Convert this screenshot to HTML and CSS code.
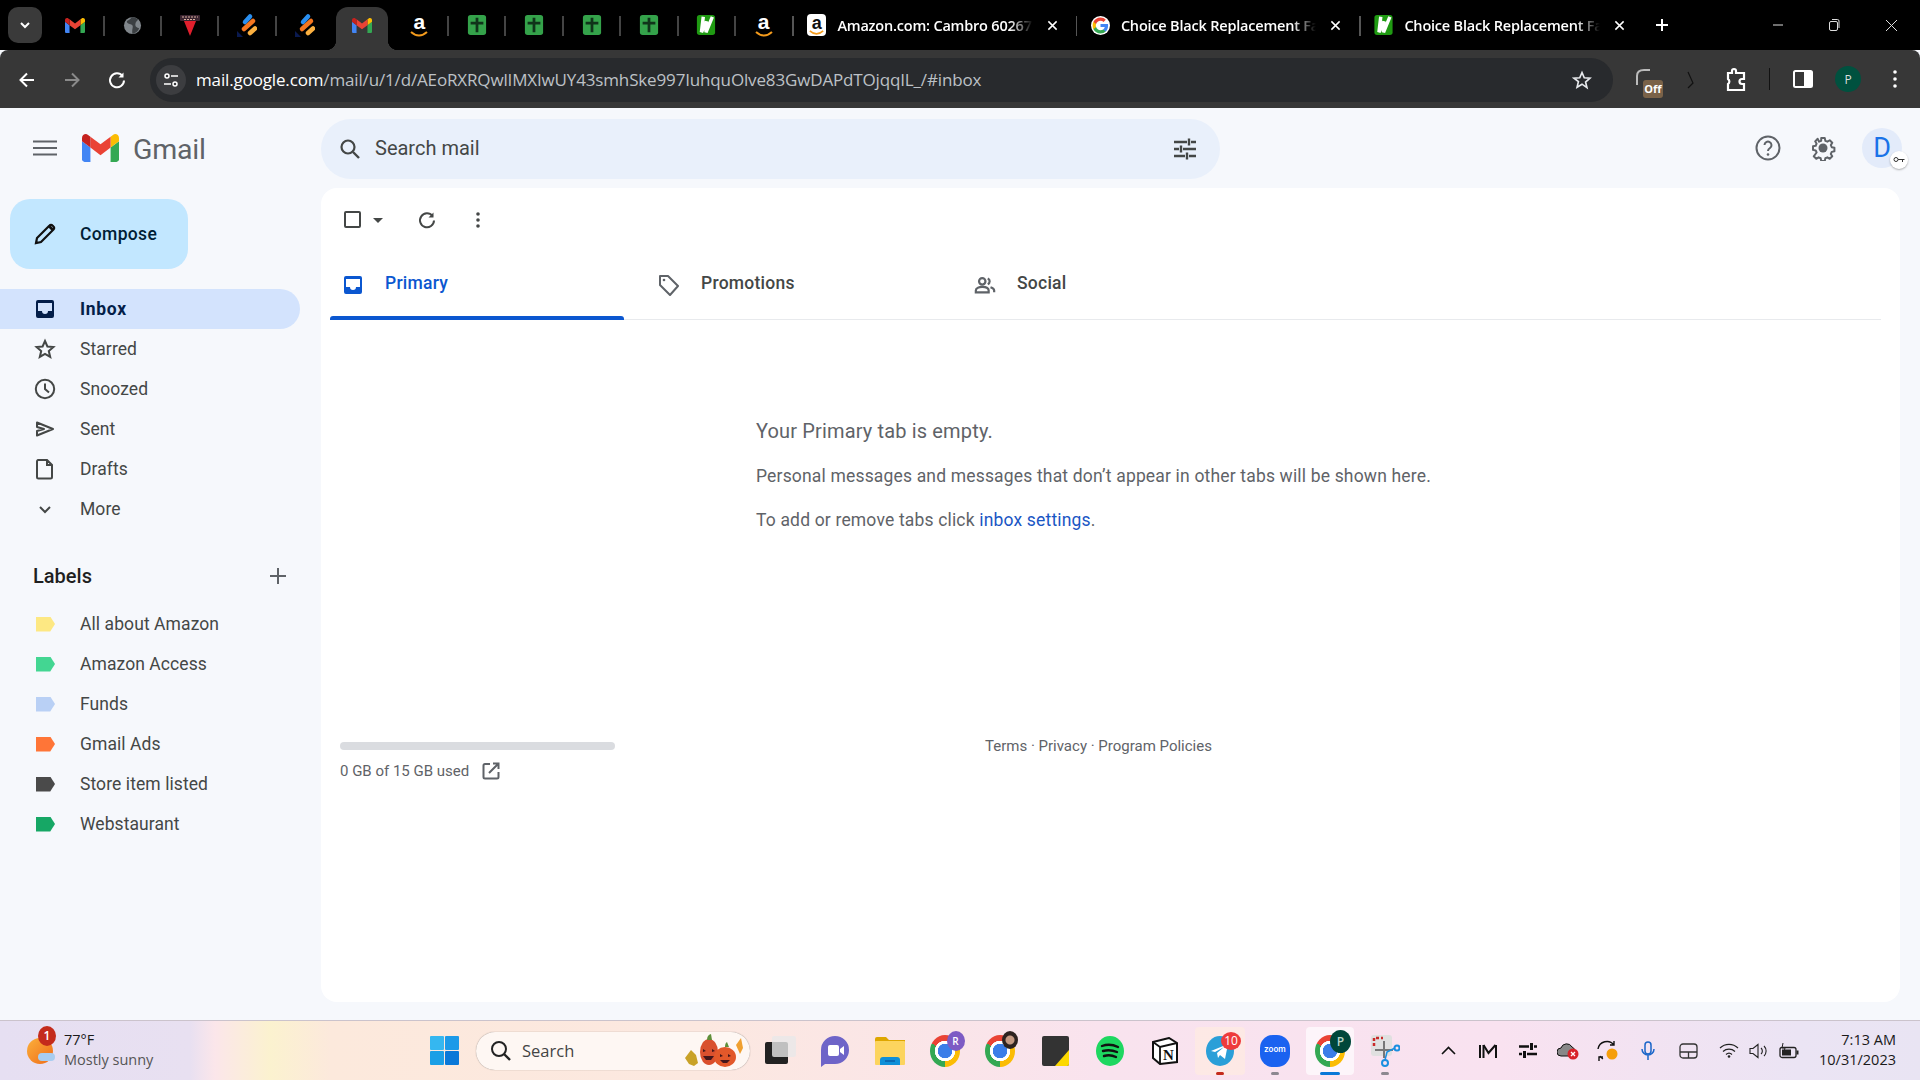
FILE: index.html
```html
<!DOCTYPE html>
<html lang="en">
<head>
<meta charset="utf-8">
<title>Gmail</title>
<link rel="stylesheet" href="styles.css">
</head>
<body>
<svg class="defs" width="0" height="0">
  <symbol id="gm" viewBox="52 42 88 66">
    <path fill="#4285f4" d="M58 108h14V74L52 59v43c0 3.32 2.69 6 6 6"/>
    <path fill="#34a853" d="M120 108h14c3.32 0 6-2.69 6-6V59l-20 15"/>
    <path fill="#fbbc04" d="M120 48v26l20-15v-8c0-7.42-8.47-11.65-14.4-7.2"/>
    <path fill="#ea4335" d="M72 74V48l24 18 24-18v26L96 92"/>
    <path fill="#c5221f" d="M52 51v8l20 15V48l-5.6-4.2c-5.94-4.45-14.4-.22-14.4 7.2"/>
  </symbol>
  <symbol id="plus" viewBox="0 0 20 22">
    <rect width="20" height="22" rx="3" fill="#34a24a"/>
    <path d="M10 3v16M3 9h14" stroke="#10331a" stroke-width="3"/>
  </symbol>
  <symbol id="smile" viewBox="0 0 18 6">
    <path d="M1 1c5 4.500 11 4.500 16 0" fill="none" stroke="#f49b1c" stroke-width="2"/>
  </symbol>
  <symbol id="ww" viewBox="0 0 20 22">
    <rect width="20" height="22" rx="3" fill="#1f9a12"/>
    <path d="M7 2 5 19 10.500 7 10 19 17 2" fill="none" stroke="#fff" stroke-width="3.800" stroke-linejoin="bevel"/>
  </symbol>
  <symbol id="jot" viewBox="0 0 20 24">
    <path d="M8 9 13 3.500" stroke="#2a8ff0" stroke-width="4.500" stroke-linecap="round"/>
    <path d="M7 16 16 8" stroke="#f5761f" stroke-width="4.500" stroke-linecap="round"/>
    <path d="M13 20 18 15.500" stroke="#fbb040" stroke-width="4.500" stroke-linecap="round"/>
    <path d="M0 18v6h6z" fill="#0a1a50"/>
  </symbol>
  <symbol id="x" viewBox="0 0 12 12">
    <path d="M1.5 1.5l9 9M10.5 1.5l-9 9" stroke="#fff" stroke-width="1.6"/>
  </symbol>
</svg>

<header class="tabstrip">
  <div class="chev"><svg width="14" height="14" viewBox="0 0 14 14"><path d="M3 5l4 4 4-4" fill="none" stroke="#fff" stroke-width="2"/></svg></div>
  <div class="minis">
    <div class="mini"><svg width="20" height="15"><use href="#gm"/></svg></div>
    <div class="mini sep"><svg width="19" height="19" viewBox="0 0 20 20"><circle cx="10" cy="10" r="9" fill="#80868b"/><path d="M9 1c-1 3-4 3-5 5 1 3 5 2 6 4s-1 4 0 9c4-1 6-3 7-6-2-1-4-1-4-4s2-4 3-5c-2-2-4-3-7-3z" fill="#3c4043"/></svg></div>
    <div class="mini sep"><svg width="20" height="24" viewBox="0 0 20 24"><path d="M4 8h12l-6 15z" fill="#e01f2d"/><rect x="0" y="2" width="20" height="6" rx="1" fill="#3a2430"/><path d="M2 4h16M4 6.500h12" stroke="#d8b0a0" stroke-dasharray="2 1"/></svg></div>
    <div class="mini sep"><svg width="20" height="24"><use href="#jot"/></svg></div>
    <div class="mini sep"><svg width="20" height="24"><use href="#jot"/></svg></div>
    <div class="mini active"><svg width="20" height="15"><use href="#gm"/></svg></div>
    <div class="mini"><span class="amz"><span class="amz-a">a</span><svg width="18" height="6"><use href="#smile"/></svg></span></div>
    <div class="mini sep"><svg width="20" height="20"><use href="#plus"/></svg></div>
    <div class="mini sep"><svg width="20" height="20"><use href="#plus"/></svg></div>
    <div class="mini sep"><svg width="20" height="20"><use href="#plus"/></svg></div>
    <div class="mini sep"><svg width="20" height="20"><use href="#plus"/></svg></div>
    <div class="mini sep"><svg width="20" height="20"><use href="#ww"/></svg></div>
    <div class="mini sep"><span class="amz"><span class="amz-a">a</span><svg width="18" height="6"><use href="#smile"/></svg></span></div>
  </div>
  <div class="longtab"><span class="fav fav-white"><span class="amz"><span class="amz-a amz-dark">a</span><svg width="15" height="5"><use href="#smile"/></svg></span></span><span class="title">Amazon.com: Cambro 60267</span><svg class="close" width="11" height="11"><use href="#x"/></svg></div>
  <div class="longtab"><span class="fav"><svg width="19" height="19" viewBox="0 0 24 24"><circle cx="12" cy="12" r="12" fill="#fff"/><path fill="#4285F4" d="M21.6 12.2c0-.7-.1-1.400-.2-2H12v3.800h5.400c-.2 1.200-.9 2.300-2 3v2.500h3.200c1.900-1.700 3-4.300 3-7.300z"/><path fill="#34A853" d="M12 22c2.700 0 5-.9 6.600-2.400l-3.200-2.500c-.9.600-2 1-3.400 1-2.600 0-4.800-1.800-5.600-4.100H3.100v2.600C4.700 19.800 8.100 22 12 22z"/><path fill="#FBBC05" d="M6.400 14c-.2-.6-.3-1.300-.3-2s.1-1.400.3-2V7.400H3.100C2.400 8.700 2 10.300 2 12s.4 3.300 1.100 4.600z"/><path fill="#EA4335" d="M12 6c1.500 0 2.800.5 3.800 1.500l2.900-2.900C17 3 14.700 2 12 2 8.100 2 4.700 4.200 3.100 7.400L6.400 10c.8-2.300 3-4 5.600-4z"/></svg></span><span class="title">Choice Black Replacement Fa</span><svg class="close" width="11" height="11"><use href="#x"/></svg></div>
  <div class="longtab"><span class="fav"><svg width="19" height="20"><use href="#ww"/></svg></span><span class="title">Choice Black Replacement Fa</span><svg class="close" width="11" height="11"><use href="#x"/></svg></div>
  <div class="newtab"><svg width="14" height="14" viewBox="0 0 14 14"><path d="M7 1v12M1 7h12" stroke="#fff" stroke-width="2"/></svg></div>
  <div class="winctl">
    <div class="wc"><svg width="12" height="12" viewBox="0 0 12 12"><path d="M1 6h10" stroke="#ddd"/></svg></div>
    <div class="wc wc-restore"><svg width="12" height="14" viewBox="0 0 12 14"><rect x="1.500" y="3.500" width="8" height="9" rx="1.500" fill="none" stroke="#ddd"/><path d="M4 1.500h5.500a1.500 1.500 0 0 1 1.500 1.500v7" fill="none" stroke="#ddd"/></svg></div>
    <div class="wc"><svg width="13" height="13" viewBox="0 0 13 13"><path d="M1 1l11 11M12 1L1 12" stroke="#ddd"/></svg></div>
  </div>
</header>

<nav class="toolbar">
  <div class="navbtn"><svg width="20" height="20" viewBox="0 0 20 20"><path d="M17 10H4M10 3.500L3.500 10l6.500 6.500" fill="none" stroke="#fff" stroke-width="2"/></svg></div>
  <div class="navbtn"><svg width="20" height="20" viewBox="0 0 20 20"><path d="M3 10h13M10 3.500l6.500 6.500-6.500 6.500" fill="none" stroke="#8a8a8a" stroke-width="2"/></svg></div>
  <div class="navbtn"><svg width="20" height="20" viewBox="0 0 20 20"><path d="M15.500 6A7 7 0 1 0 17 10.500" fill="none" stroke="#fff" stroke-width="2"/><path d="M16.500 2.500v5h-5z" fill="#fff"/></svg></div>
  <div class="urlbar">
    <div class="siteinfo"><svg width="16" height="16" viewBox="0 0 16 16"><circle cx="4" cy="4" r="2" fill="none" stroke="#fff" stroke-width="1.500"/><path d="M8 4h7M1 12h7" stroke="#fff" stroke-width="1.500"/><circle cx="12" cy="12" r="2" fill="none" stroke="#fff" stroke-width="1.500"/></svg></div>
    <div class="url"><span class="domain">mail.google.com</span>/mail/u/1/d/AEoRXRQwlIMXIwUY43smhSke997IuhquOlve83GwDAPdTOjqqIL_/#inbox</div>
    <svg class="star" width="20" height="20" viewBox="0 0 24 24"><path d="M12 3l2.700 6.300 6.800.6-5.200 4.500 1.600 6.700L12 17l-5.900 3.600 1.600-6.700L2.500 9.900l6.800-.6z" fill="none" stroke="#e8eaed" stroke-width="2"/></svg>
  </div>
  <div class="ext-off"><svg width="26" height="20" viewBox="0 0 26 20"><path d="M2 17V8c0-4 3-6 7-6h6" fill="none" stroke="#bbb" stroke-width="2"/></svg><span class="off">Off</span></div>
  <svg class="ext-slash" width="8" height="18" viewBox="0 0 8 18"><path d="M1 1l5 11-5 5" fill="none" stroke="#111" stroke-width="1.200"/></svg>
  <svg class="ext-puzzle" width="22" height="24" viewBox="0 0 22 24"><path d="M3 5h4V3a2 2 0 0 1 4 0v2h8v6h-2a2 2 0 0 0 0 5h2v6H3v-6a3 3 0 0 0 0-5z" transform="translate(0 1)" fill="none" stroke="#fff" stroke-width="2.200"/></svg>
  <div class="tool-sep"></div>
  <svg class="side" width="20" height="18" viewBox="0 0 20 18"><rect x="1" y="1" width="18" height="16" rx="1.500" fill="none" stroke="#fff" stroke-width="2"/><rect x="11" y="1" width="8" height="16" fill="#fff"/></svg>
  <div class="prof">P</div>
  <svg class="dots" width="4" height="18" viewBox="0 0 4 18"><circle cx="2" cy="2" r="1.800" fill="#fff"/><circle cx="2" cy="9" r="1.800" fill="#fff"/><circle cx="2" cy="16" r="1.800" fill="#fff"/></svg>
</nav>

<div class="app">
  <aside class="sidebar">
    <div class="brand">
      <svg class="burger" width="24" height="16" viewBox="0 0 24 16"><path d="M0 1.500h24M0 8h24M0 14.500h24" stroke="#5f6368" stroke-width="2"/></svg>
      <svg class="mlogo" width="37" height="28"><use href="#gm"/></svg>
      <span class="wordmark">Gmail</span>
    </div>
    <button class="compose"><svg width="24" height="24" viewBox="0 0 24 24"><path d="M3 21l1-5L16.500 3.500a2 2 0 0 1 3 0l1 1a2 2 0 0 1 0 3L8 20z" fill="none" stroke="#111" stroke-width="2.200"/><path d="M15 5l4 4 2-2-4-4z" fill="#111"/></svg><span>Compose</span></button>
    <ul class="nav">
      <li class="row current"><svg class="ic" width="24" height="24" viewBox="0 0 24 24"><path d="M5 3h14a2 2 0 0 1 2 2v14a2 2 0 0 1-2 2H5a2 2 0 0 1-2-2V5a2 2 0 0 1 2-2zm0 3v8h4a3 3 0 0 0 6 0h4V6z" fill="#041e49" fill-rule="evenodd"/></svg><span>Inbox</span></li>
      <li class="row"><svg class="ic" width="24" height="24" viewBox="0 0 24 24"><path d="M12 4l2.400 5.500 6 .5-4.600 4 1.400 5.900L12 16.800 6.800 19.900 8.200 14 3.600 10l6-.5z" fill="none" stroke="#444746" stroke-width="2"/></svg><span>Starred</span></li>
      <li class="row"><svg class="ic" width="24" height="24" viewBox="0 0 24 24"><circle cx="12" cy="12" r="9.200" fill="none" stroke="#444746" stroke-width="2"/><path d="M12 6.500V12l4 3.500" fill="none" stroke="#444746" stroke-width="2"/></svg><span>Snoozed</span></li>
      <li class="row"><svg class="ic" width="24" height="24" viewBox="0 0 24 24"><path d="M4 5.500L20 12 4 18.500V14l7-2-7-2z" fill="none" stroke="#444746" stroke-width="2" stroke-linejoin="round"/></svg><span>Sent</span></li>
      <li class="row"><svg class="ic" width="24" height="24" viewBox="0 0 24 24"><path d="M5 3h9l5 5v12a1.500 1.500 0 0 1-1.500 1.500h-12A1.500 1.500 0 0 1 4 20V4.500A1.500 1.500 0 0 1 5 3zM14 3v5h5" fill="none" stroke="#444746" stroke-width="2"/></svg><span>Drafts</span></li>
      <li class="row"><svg class="ic" width="24" height="24" viewBox="0 0 24 24"><path d="M7 10l5 5 5-5" fill="none" stroke="#444746" stroke-width="2"/></svg><span>More</span></li>
    </ul>
    <div class="labels-head"><span>Labels</span><svg width="16" height="16" viewBox="0 0 16 16"><path d="M8 0v16M0 8h16" stroke="#5f6368" stroke-width="2"/></svg></div>
    <ul class="nav labels">
      <li class="row"><span class="tag tag-yellow"></span><span>All about Amazon</span></li>
      <li class="row"><span class="tag tag-mint"></span><span>Amazon Access</span></li>
      <li class="row"><span class="tag tag-blue"></span><span>Funds</span></li>
      <li class="row"><span class="tag tag-orange"></span><span>Gmail Ads</span></li>
      <li class="row"><span class="tag tag-dark"></span><span>Store item listed</span></li>
      <li class="row"><span class="tag tag-green"></span><span>Webstaurant</span></li>
    </ul>
  </aside>

  <main class="main">
    <div class="topbar">
      <div class="search">
        <svg width="24" height="24" viewBox="0 0 24 24"><circle cx="10" cy="10" r="6.500" fill="none" stroke="#444746" stroke-width="2.200"/><path d="M15 15l6 6" stroke="#444746" stroke-width="2.400"/></svg>
        <span class="ph">Search mail</span>
        <svg class="tune" width="24" height="24" viewBox="0 0 24 24"><path d="M1 5h13M18 5h5M1 12h5M10 12h13M1 19h11M16 19h7M16 1.500v7M8 8.500v7M14 15.500v7" stroke="#444746" stroke-width="2.400"/></svg>
      </div>
      <div class="top-icons">
        <svg class="help" width="26" height="26" viewBox="0 0 26 26"><circle cx="13" cy="13" r="11.500" fill="none" stroke="#5f6368" stroke-width="2"/><path d="M9.500 10a3.500 3.500 0 1 1 5.500 3c-1.500 1-2 1.500-2 3" fill="none" stroke="#5f6368" stroke-width="2"/><circle cx="13" cy="19.500" r="1.300" fill="#5f6368"/></svg>
        <svg class="gear" width="26" height="26" viewBox="0 0 26 26"><path d="M11 2h4l.6 3 2.300 1 2.600-1.600 2.800 2.800-1.600 2.600 1 2.300 3 .6v4l-3 .6-1 2.300 1.600 2.600-2.800 2.800-2.600-1.600-2.300 1-.6 3h-4l-.6-3-2.300-1-2.600 1.600-2.800-2.800L5.900 18l-1-2.300-3-.6v-4l3-.6 1-2.300-1.600-2.600 2.800-2.800L8.700 6 11 5z" transform="translate(1.300 1.300) scale(.9)" fill="none" stroke="#5f6368" stroke-width="2.200" stroke-linejoin="round"/><circle cx="13" cy="13" r="4.500" fill="#5f6368"/></svg>
        <div class="avatar">D<span class="keybadge"><svg width="12" height="8" viewBox="0 0 12 8"><circle cx="3" cy="3.500" r="2" fill="none" stroke="#333"/><path d="M5 3.500h6.500M9.500 3.500v2.500" stroke="#333"/></svg></span></div>
      </div>
    </div>

    <section class="card">
      <div class="actions">
        <span class="check"></span>
        <svg class="caret" width="10" height="5" viewBox="0 0 10 5"><path d="M0 0h10L5 5z" fill="#444746"/></svg>
        <svg class="refresh" width="20" height="20" viewBox="0 0 20 20"><path d="M15.500 6A7 7 0 1 0 17 10.500" fill="none" stroke="#444746" stroke-width="2"/><path d="M16.500 2.500v5h-5z" fill="#444746"/></svg>
        <svg class="more" width="4" height="16" viewBox="0 0 4 16"><circle cx="2" cy="2" r="1.800" fill="#444746"/><circle cx="2" cy="8" r="1.800" fill="#444746"/><circle cx="2" cy="14" r="1.800" fill="#444746"/></svg>
      </div>
      <div class="tabs">
        <div class="tab selected"><svg width="20" height="20" viewBox="0 0 20 20"><path d="M3 1h14a2 2 0 0 1 2 2v14a2 2 0 0 1-2 2H3a2 2 0 0 1-2-2V3a2 2 0 0 1 2-2zm0 3v8h4a3 3 0 0 0 6 0h4V4z" fill="#0b57d0" fill-rule="evenodd"/></svg><span>Primary</span></div>
        <div class="tab"><svg width="22" height="22" viewBox="0 0 22 22"><path d="M2 2h8l10 10-8 9L2 11z" fill="none" stroke="#5f6368" stroke-width="2" stroke-linejoin="round"/><circle cx="6" cy="6" r="1.300" fill="#5f6368"/></svg><span>Promotions</span></div>
        <div class="tab"><svg width="22" height="22" viewBox="0 0 24 24"><circle cx="9" cy="8" r="3.500" fill="none" stroke="#5f6368" stroke-width="2.400"/><path d="M2 20v-2c0-3 4-4 7-4s7 1 7 4v2z" fill="none" stroke="#5f6368" stroke-width="2.400"/><path d="M15 4.800a3.500 3.500 0 0 1 0 6.400M18 14.500c2 .7 4 1.700 4 3.500v2" fill="none" stroke="#5f6368" stroke-width="2.400"/></svg><span>Social</span></div>
      </div>
      <div class="empty">
        <h2>Your Primary tab is empty.</h2>
        <p class="msg">Personal messages and messages that don’t appear in other tabs will be shown here.</p>
        <p>To add or remove tabs click <a href="#">inbox settings</a>.</p>
      </div>
      <div class="foot">
        <div class="storage">
          <div class="bar"></div>
          <div class="used"><span>0 GB of 15 GB used</span><svg width="18" height="18" viewBox="0 0 18 18"><path d="M8 2H3a1.500 1.500 0 0 0-1.500 1.500v11.500A1.500 1.500 0 0 0 3 16.500h12a1.500 1.500 0 0 0 1.500-1.500V10M11 1.500h5.500V7M16.500 1.500L7 11" fill="none" stroke="#5f6368" stroke-width="2"/></svg></div>
        </div>
        <div class="legal">Terms · Privacy · Program Policies</div>
      </div>
    </section>
  </main>
</div>

<footer class="taskbar">
  <div class="weather">
    <span class="sun"><span class="sun-cloud"></span><span class="sun-badge">1</span></span>
    <div class="wtext"><div class="temp">77°F</div><div class="cond">Mostly sunny</div></div>
  </div>
  <svg class="start" width="29" height="29" viewBox="0 0 29 29"><rect width="14" height="14" rx="1" fill="#35b7f0"/><rect x="15" width="14" height="14" rx="1" fill="#1c9ae8"/><rect y="15" width="14" height="14" rx="1" fill="#1b9fe6"/><rect x="15" y="15" width="14" height="14" rx="1" fill="#0a78d8"/></svg>
  <div class="tsearch">
    <svg width="21" height="21" viewBox="0 0 21 21"><circle cx="9" cy="9" r="7" fill="none" stroke="#222" stroke-width="2"/><path d="M14 14l6 6" stroke="#222" stroke-width="2.400"/></svg>
    <span class="tsearch-text">Search</span>
    <svg class="pumpkins" width="62" height="34" viewBox="0 0 62 34"><path d="M2 24l6-8 5 5 2 8-4 3-5-2z" fill="#c9a227"/><path d="M58 4l2 10-3 6-4-9z" fill="#f0a030"/><ellipse cx="26" cy="18" rx="9" ry="13" fill="#d9502e"/><ellipse cx="42" cy="23" rx="11" ry="10" fill="#e2582a"/><path d="M24 6q0-5 4-6l1 6zM42 13q0-4 2-5l2 5z" fill="#5f8f3a"/><path d="M20 15l3 2-3 1zM29 15l3 2-3 1zM37 20l3 2-3 1zM45 20l3 2-3 1zM20 22h11l-3 4h-5zM37 26h10l-3 3h-4z" fill="#43161a"/></svg>
  </div>
  <div class="slot"><svg width="31" height="29" viewBox="0 0 31 29"><rect x="0" y="6" width="23" height="22" rx="2" fill="#222"/><rect x="7" y="0" width="24" height="21" rx="2" fill="#e8e8e8" opacity=".8"/></svg></div>
  <div class="slot"><svg width="30" height="32" viewBox="0 0 30 32"><path d="M15 1a14 14 0 0 1 14 14 14 14 0 0 1-14 14H5l-4 3v-17A14 14 0 0 1 15 1z" fill="#6e64c8"/><rect x="8" y="10" width="11" height="11" rx="2" fill="#fff"/><path d="M20 14l4-3v9l-4-3z" fill="#fff"/></svg></div>
  <div class="slot"><svg width="30" height="28" viewBox="0 0 30 28"><path d="M0 2a2 2 0 0 1 2-2h9l3 3h16v4H0z" fill="#dea600"/><rect y="4" width="30" height="24" rx="1" fill="#fcd45e"/><path d="M5 28v-5a3 3 0 0 1 3-3h14a3 3 0 0 1 3 3v5z" fill="#0f8fd8"/><path d="M10 24h10" stroke="#0a5ea8" stroke-width="1.500"/></svg></div>
  <div class="slot"><span class="chrome"></span><span class="chip chip-r">R</span></div>
  <div class="slot"><span class="chrome"></span><span class="chip chip-photo"></span></div>
  <div class="slot"><svg width="27" height="30" viewBox="0 0 27 30"><rect width="27" height="30" rx="2" fill="#333"/><path d="M13 30 27 14v14a2 2 0 0 1-2 2z" fill="#fcd800"/></svg></div>
  <div class="slot"><svg width="28" height="30" viewBox="0 0 28 30"><ellipse cx="14" cy="15" rx="14" ry="15" fill="#1ed760"/><path d="M6 10q8-3 16 1M7 15q7-2 14 1M8 20q6-2 12 1" fill="none" stroke="#111" stroke-width="2.400" stroke-linecap="round"/></svg></div>
  <div class="slot"><svg width="26" height="28" viewBox="0 0 26 28"><path d="M1 5 17 1l8 5v19l-17 2-7-6z" fill="#fff" stroke="#111" stroke-width="2"/><path d="M1 5l7 5 17-4M8 10v17" fill="none" stroke="#111" stroke-width="1.800"/><text x="16.500" y="23" text-anchor="middle" class="notion-n">N</text></svg></div>
  <div class="slot highlight-red"><svg width="28" height="30" viewBox="0 0 28 30"><ellipse cx="14" cy="15" rx="14" ry="15" fill="#2a9fd8"/><path d="M5 15l17-7-3 15-5-4-2 3-1-5 7-6-9 5z" fill="#fff"/></svg><span class="tele-badge">10</span><span class="ind ind-red"></span></div>
  <div class="slot"><svg width="30" height="32" viewBox="0 0 30 32"><rect width="30" height="32" rx="13" fill="#1a62f0"/></svg><span class="zoomword">zoom</span><span class="ind ind-gray"></span></div>
  <div class="slot highlight-white"><span class="chrome"></span><span class="chip chip-p">P</span><span class="ind ind-blue"></span></div>
  <div class="slot"><svg width="30" height="34" viewBox="0 0 30 34"><rect x="1" y="1" width="21" height="21" rx="3" fill="#e0e0e0"/><path d="M4 12V4h9" fill="none" stroke="#c92a2a" stroke-width="2.500" stroke-dasharray="3 2"/><path d="M14 7v17M5 16h18" stroke="#777" stroke-width="2"/><circle cx="15" cy="29" r="3" fill="none" stroke="#1a8fe0" stroke-width="2"/><circle cx="27" cy="14" r="2.500" fill="none" stroke="#1a8fe0" stroke-width="2"/><path d="M15 26l2-8 8-4" fill="none" stroke="#1a8fe0" stroke-width="1.500"/></svg><span class="ind ind-gray"></span></div>
  <div class="tray">
    <div class="ti"><svg width="15" height="9" viewBox="0 0 15 9"><path d="M1 8l6.500-6.500L14 8" fill="none" stroke="#111" stroke-width="1.600"/></svg></div>
    <div class="ti"><svg width="18" height="14" viewBox="0 0 18 14"><path d="M1 1v13M4.500 1v13M17 1v13" stroke="#111" stroke-width="2"/><path d="M4.500 1l5 8 7-8" fill="none" stroke="#111" stroke-width="2"/></svg></div>
    <div class="ti"><svg width="18" height="15" viewBox="0 0 18 15"><path d="M0 3.500h10M15 3.500h3M0 11h3M8 11h10" stroke="#111" stroke-width="2.500"/><rect x="11" y="0" width="3" height="7" fill="#111"/><rect x="4" y="8" width="3" height="7" fill="#111"/></svg></div>
    <div class="ti"><svg width="22" height="18" viewBox="0 0 22 18"><path d="M4 14a4 4 0 0 1 0-8 6 6 0 0 1 11-1 4 4 0 0 1 2 6l-3 3z" fill="#888" stroke="#111"/><circle cx="16" cy="12" r="5.500" fill="#d8232a"/><path d="M14 10l4 4M18 10l-4 4" stroke="#fff" stroke-width="1.300"/></svg></div>
    <div class="ti"><svg width="22" height="22" viewBox="0 0 22 22"><path d="M1 9a9 9 0 0 1 16-4M17 1v4h-4M6 19a8 8 0 0 1-3-3M2 21v-4h4" fill="none" stroke="#111" stroke-width="1.400"/><circle cx="15" cy="14" r="5.500" fill="#f59e0b"/></svg></div>
    <div class="ti"><svg width="14" height="20" viewBox="0 0 14 20"><rect x="4" y="1" width="6" height="12" rx="3" fill="none" stroke="#1a66c9" stroke-width="1.500"/><path d="M1 8a6 6 0 0 0 12 0M7 14v5" fill="none" stroke="#1a66c9" stroke-width="1.500"/></svg></div>
    <div class="ti"><svg width="19" height="16" viewBox="0 0 19 16"><rect x="1" y="1" width="17" height="14" rx="3" fill="none" stroke="#333" stroke-width="1.300"/><path d="M1 9h17M9.500 9v6" stroke="#333" stroke-width="1.300"/></svg></div>
    <div class="ti ti-wifi"><svg width="20" height="15" viewBox="0 0 20 15"><path d="M1 5a13 13 0 0 1 18 0M4 8.500a9 9 0 0 1 12 0M7 11.500a4.500 4.500 0 0 1 6 0" fill="none" stroke="#222" stroke-width="1.200"/><circle cx="10" cy="13.500" r="1.300" fill="#222"/></svg></div>
    <div class="ti ti-vol"><svg width="20" height="16" viewBox="0 0 20 16"><path d="M1 5.500h3L9 1.500v13l-5-4H1z" fill="none" stroke="#222" stroke-width="1.100"/><path d="M12 5a4 4 0 0 1 0 6M15 3a7 7 0 0 1 0 10" fill="none" stroke="#222" stroke-width="1.100"/></svg></div>
    <div class="ti ti-bat"><svg width="20" height="16" viewBox="0 0 20 16"><rect x="1" y="4.500" width="16" height="10" rx="2" fill="none" stroke="#222" stroke-width="1.300"/><rect x="3" y="6.500" width="9" height="6" fill="#222"/><rect x="17.500" y="7.500" width="2" height="4" fill="#222"/><path d="M4 0l-1 5h3L5 9" fill="none" stroke="#222" stroke-width="1"/></svg></div>
    <div class="clock"><div>7:13 AM</div><div>10/31/2023</div></div>
  </div>
</footer>
</body>
</html>
```

FILE: styles.css
```css
* { box-sizing: border-box; }
html, body { margin: 0; padding: 0; height: 100%; }
body { width: 1920px; height: 1080px; overflow: hidden; display: flex; flex-direction: column; font-family: Roboto, "Liberation Sans", sans-serif; background: #f6f8fc; }
ul { list-style: none; margin: 0; padding: 0; }
svg { display: block; flex: none; }
.defs { position: absolute; }
.amz { display: flex; flex-direction: column; align-items: center; }
.amz-a { font: 700 21px/18px "Liberation Sans", sans-serif; color: #fff; height: 18px; }
.amz-dark { font-size: 18px; line-height: 14px; height: 14px; color: #111; }
.notion-n { font: 700 15px "Liberation Serif", serif; fill: #111; }

/* tab strip */
.tabstrip { height: 50px; flex: none; background: #000; display: flex; align-items: center; font-family: "Open Sans", sans-serif; }
.chev { width: 34px; height: 36px; margin-left: 8px; background: #3a3a3a; border-radius: 10px; display: flex; align-items: center; justify-content: center; }
.minis { display: flex; height: 50px; margin-left: 4.3px; }
.mini { width: 57.4px; height: 50px; display: flex; align-items: center; justify-content: center; position: relative; }
.mini.sep::before { content: ""; position: absolute; left: -1px; top: 16px; width: 2px; height: 20px; background: #444; }
.mini.active { background: #373737; width: 51.4px; margin: 7px 3px 0; height: 43px; border-radius: 12px 12px 0 0; padding-bottom: 7px; }
.mini.active::before, .mini.active::after { content: ""; position: absolute; bottom: 0; width: 10px; height: 10px; }
.mini.active::before { left: -10px; background: radial-gradient(circle at 0 0, #000 10px, #373737 10.5px); }
.mini.active::after { right: -10px; background: radial-gradient(circle at 100% 0, #000 10px, #373737 10.5px); }
.longtab { width: 283.5px; height: 50px; display: flex; align-items: center; padding: 0 18px 0 15px; gap: 11px; position: relative; flex: none; }
.longtab::before { content: ""; position: absolute; left: 0; top: 16px; width: 1.5px; height: 20px; background: #555; }
.fav { width: 19px; height: 22px; display: flex; align-items: center; justify-content: center; flex: none; }
.fav-white { background: #fff; border-radius: 4px; }
.title { flex: 1; min-width: 0; white-space: nowrap; color: #fff; font-size: 14.5px; font-weight: 600; letter-spacing: -.2px; -webkit-mask-image: linear-gradient(90deg, #000 88%, transparent 100%); mask-image: linear-gradient(90deg, #000 88%, transparent 100%); }
.close { margin-left: 3px; }
.newtab { width: 38px; height: 50px; display: flex; align-items: center; justify-content: center; flex: none; }
.winctl { margin-left: auto; display: flex; }
.wc { width: 57px; height: 50px; display: flex; align-items: center; justify-content: center; }
.wc-restore svg { margin-left: -2px; }

/* browser toolbar */
.toolbar { height: 58px; flex: none; background: #373737; border-radius: 8px 8px 0 0; display: flex; align-items: center; padding: 2px 0 0 4.500px; }
.navbtn { width: 45px; height: 40px; display: flex; align-items: center; justify-content: center; flex: none; }
.urlbar { margin-left: 10.500px; width: 1463px; height: 44px; border-radius: 22px; background: #282a2d; display: flex; align-items: center; padding: 0 21px 0 6px; flex: none; }
.siteinfo { width: 30px; height: 30px; border-radius: 50%; background: #3c3d40; display: flex; align-items: center; justify-content: center; flex: none; }
.url { margin-left: 10px; flex: 1; font-family: "Open Sans", sans-serif; font-size: 17px; color: #bdc1c6; white-space: nowrap; letter-spacing: -.15px; margin-top: -1px; }
.domain { color: #fff; }
.ext-off { width: 28px; height: 30px; margin-left: 22px; position: relative; flex: none; margin-top: 6px; }
.off { position: absolute; right: 0; bottom: 0; width: 20px; height: 18px; background: #7a6248; border-radius: 3px; color: #fff; font: 700 11px "Open Sans", sans-serif; text-align: center; line-height: 18px; }
.ext-slash { margin-left: 24px; }
.ext-puzzle { margin-left: 30px; margin-top: -2px; }
.tool-sep { width: 1px; height: 22px; background: #111; margin-left: 22px; flex: none; margin-top: -2px; }
.side { margin-left: 23px; margin-top: -2px; }
.prof { width: 26px; height: 26px; margin-left: 22px; margin-top: -2px; border-radius: 50%; background: #00513f; color: #ddd; font: 500 12px "Open Sans", sans-serif; display: flex; align-items: center; justify-content: center; flex: none; }
.dots { margin-left: 32px; margin-top: -2px; }

/* gmail */
.app { flex: 1; min-height: 0; display: flex; background: #f6f8fc; }
.sidebar { width: 320px; flex: none; }
.brand { height: 80px; display: flex; align-items: center; padding-left: 33px; }
.mlogo { margin-left: 25px; }
.wordmark { margin-left: 14px; margin-top: 2px; font-size: 28.500px; color: #5f6368; letter-spacing: -.2px; }
.compose { margin: 11px 0 0 10px; width: 178px; height: 70px; border: 0; border-radius: 20px; background: #c2e7ff; display: flex; align-items: center; padding: 0 0 0 23px; gap: 23px; font: 500 17.500px Roboto, sans-serif; letter-spacing: .35px; color: #001d35; }
.nav { margin-top: 20px; }
.row { height: 40px; width: 300px; border-radius: 0 20px 20px 0; display: flex; align-items: center; padding-left: 33px; gap: 23px; font-size: 17.500px; letter-spacing: .08px; color: #444746; }
.row.current { background: #d3e3fd; color: #041e49; font-weight: 700; letter-spacing: .7px; }
.labels-head { margin-top: 27px; height: 40px; width: 286px; padding-left: 33px; display: flex; align-items: center; justify-content: space-between; font-size: 20px; font-weight: 500; color: #1f1f1f; }
.labels { margin-top: 8px; }
.tag { height: 15px; flex: none; clip-path: polygon(0 0, 75% 0, 100% 50%, 75% 100%, 0 100%); margin-left: 3px; width: 19px; margin-right: 2px; }
.tag-yellow { background: #fde883; }
.tag-mint { background: #43d692; }
.tag-blue { background: #b9d0f5; }
.tag-orange { background: #ff7537; }
.tag-dark { background: #4a4a4a; }
.tag-green { background: #16a765; }

.main { flex: 1; min-width: 0; padding: 0 20px 18px 1px; display: flex; flex-direction: column; }
.topbar { height: 80px; flex: none; display: flex; align-items: flex-start; }
.search { margin-top: 11px; width: 899px; height: 60px; border-radius: 30px; background: #e9f0fb; display: flex; align-items: center; padding: 0 23px 0 17px; }
.ph { margin-left: 13px; margin-top: -2px; flex: 1; font-size: 20px; color: #444746; }
.top-icons { margin-left: auto; display: flex; align-items: center; height: 80px; }
.gear { margin-left: 29px; }
.avatar { margin-left: 26px; margin-right: -2px; width: 40px; height: 40px; border-radius: 50%; background: #e3ebfa; color: #1a73e8; font-size: 27px; display: flex; align-items: center; justify-content: center; position: relative; }
.keybadge { position: absolute; right: -6px; bottom: -1px; width: 18px; height: 18px; border-radius: 50%; background: #fff; box-shadow: 0 1px 2px rgba(0,0,0,.3); display: flex; align-items: center; justify-content: center; }
.card { flex: 1; min-height: 0; background: #fff; border-radius: 16px; }
.actions { height: 64px; display: flex; align-items: center; padding-left: 23px; }
.check { width: 17px; height: 17px; border: 2px solid #444746; border-radius: 2px; margin-top: -1px; }
.caret { margin-left: 12px; }
.refresh { margin-left: 34px; margin-top: -1px; }
.more { margin-left: 39px; margin-top: -1px; }
.tabs { height: 68px; margin: 0 19px 0 9px; border-bottom: 1px solid #e8eaed; display: flex; gap: 22px; }
.tab { width: 294px; padding-left: 13px; display: flex; align-items: center; gap: 22px; font-size: 17.500px; font-weight: 500; letter-spacing: .25px; color: #444746; position: relative; }
.tab span { margin-top: -6px; margin-left: 0; }
.tab svg { margin-top: -2px; }
.tab svg[width="22"] { margin-left: -1px; margin-right: -1px; }
.tab.selected { color: #0b57d0; }
.tab.selected::after { content: ""; position: absolute; left: 0; right: 0; bottom: -1px; height: 4px; background: #0b57d0; border-radius: 3px 3px 0 0; }
.empty { margin: 99px 0 0 435px; color: #5f6368; }
.empty h2 { margin: 0; font-size: 20px; line-height: 24px; font-weight: 400; letter-spacing: .15px; }
.empty p { margin: 20px 0 0; font-size: 17.500px; line-height: 24px; letter-spacing: .17px; }
.empty .msg { margin-top: 21px; }
.empty a { color: #1a56c4; text-decoration: none; }
.foot { margin-top: 204px; padding-left: 19px; display: flex; }
.storage { width: 275px; padding-top: 6px; }
.bar { height: 8px; border-radius: 4px; background: #dadce0; }
.used { margin-top: 10px; display: flex; align-items: center; gap: 13px; font-size: 15px; color: #5f6368; line-height: 22px; }
.legal { margin-left: 370px; font-size: 15px; line-height: 20px; color: #5f6368; }

/* taskbar */
.taskbar { height: 60px; flex: none; border-top: 1px solid #cbc3cc; display: flex; align-items: center; font-family: "Open Sans", sans-serif; background: linear-gradient(90deg, #e6dff2 0, #e8e0f1 190px, #fbe6ea 215px, #fbf2cf 270px, #fce9dc 330px, #fce8e0 700px, #f9e3ee 1100px, #f9e2f0 1500px, #ebe4f4 1800px, #e9e4f3 1920px); }
.weather { width: 430px; flex: none; display: flex; align-items: center; padding-left: 27px; }
.sun { width: 26px; height: 26px; border-radius: 50%; background: linear-gradient(135deg, #fbb03b, #ef6c1a); position: relative; flex: none; }
.sun-cloud { position: absolute; right: -2px; bottom: 3px; width: 17px; height: 8px; border-radius: 5px; background: #a8cdf0; }
.sun-badge { position: absolute; left: 11px; top: -12px; width: 18px; height: 20px; border-radius: 50%; background: #c42b1c; color: #fff; font-size: 12px; font-weight: 600; text-align: center; line-height: 20px; }
.wtext { margin-left: 11px; font-size: 14.500px; line-height: 20px; color: #1a1a1a; margin-top: -2px; }
.cond { color: #555; }
.start { flex: none; }
.tsearch { margin-left: 17px; width: 274px; height: 38px; border-radius: 19px; background: #fef7f3; box-shadow: 0 0 1px rgba(0,0,0,.5); display: flex; align-items: center; padding-left: 14px; position: relative; flex: none; }
.tsearch-text { margin-left: 11px; font-size: 16.500px; color: #444; }
.pumpkins { position: absolute; right: 5px; top: 2px; }
.slot { width: 55px; height: 48px; flex: none; display: flex; align-items: center; justify-content: center; position: relative; }
.tsearch + .slot { margin-left: 2.500px; }
.highlight-red { background: rgba(255,235,225,.7); width: 50px; margin: 0 2.500px; border-radius: 4px; }
.highlight-white { background: rgba(255,255,255,.65); width: 48px; margin: 0 3.500px; border-radius: 4px; }
.chrome { width: 30px; height: 32px; border-radius: 50%; background: radial-gradient(circle at 50% 50%, #3b7de8 0 7px, #fff 7.500px 10px, transparent 10.500px), conic-gradient(#ea4335 0 60deg, #fbbc04 60deg 180deg, #34a853 180deg 300deg, #ea4335 300deg); }
.chip { position: absolute; border-radius: 50%; width: 18px; height: 20px; top: 4px; left: 29px; font-size: 10px; display: flex; align-items: center; justify-content: center; color: #fff; font-weight: 600; }
.chip-r { background: #7d5bc4; }
.chip-photo { background: radial-gradient(circle at 50% 50%, #c49a83 0 4px, #2d2320 5px); width: 16px; height: 18px; }
.chip-p { background: #00463a; color: #b8d4c8; left: 24px; top: 3px; width: 21px; height: 23px; font-size: 12px; }
.tele-badge { position: absolute; left: 26px; top: 5px; width: 20px; height: 18px; border-radius: 50%; background: #ee3b3b; color: #fff; font-size: 12px; text-align: center; line-height: 18px; }
.zoomword { position: absolute; left: 0; right: 0; top: 17px; text-align: center; color: #fff; font: 500 8.500px Roboto, sans-serif; }
.ind { position: absolute; bottom: 0; left: 50%; height: 3px; border-radius: 2px; transform: translateX(-50%); width: 8px; }
.ind-red { background: #c42b1c; }
.ind-gray { background: #8d8890; }
.ind-blue { background: #0a78d8; width: 20px; }
.tray { flex: 1; display: flex; align-items: center; margin-left: 15.500px; }
.ti { width: 40px; height: 40px; display: flex; align-items: center; justify-content: center; flex: none; }
.ti-wifi { width: 42px; }
.ti-vol { width: 18px; }
.ti-bat { width: 42px; }
.clock { margin-left: auto; padding-right: 24px; margin-top: -2px; text-align: right; font-size: 14.500px; line-height: 20px; color: #1a1a1a; }
```
